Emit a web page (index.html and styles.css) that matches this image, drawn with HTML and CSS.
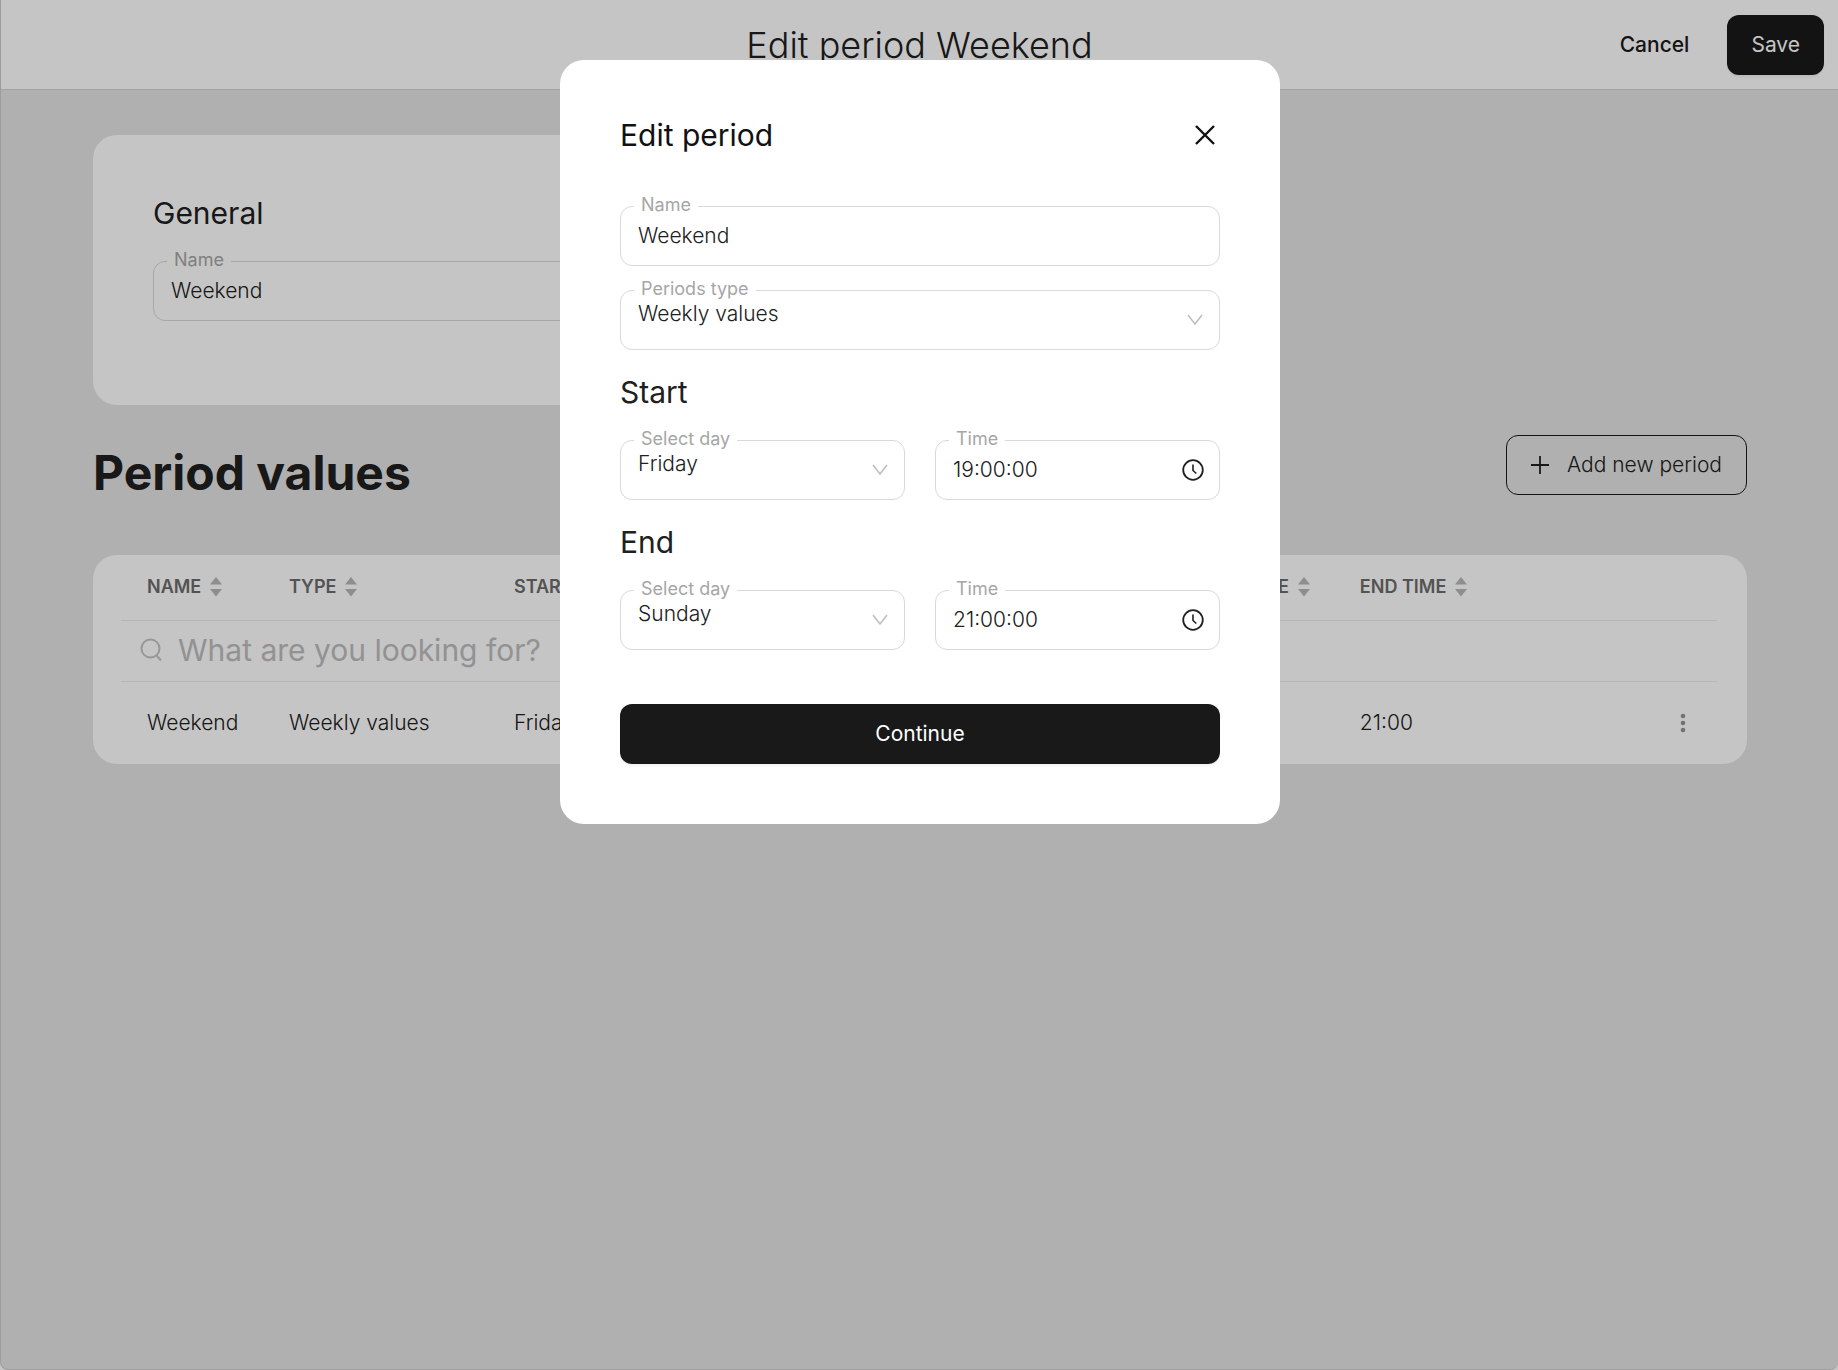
FILE: index.html
```html
<!DOCTYPE html>
<html lang="en">
<head>
<meta charset="utf-8">
<meta name="viewport" content="width=device-width, initial-scale=1">
<title>Edit period Weekend</title>
<link rel="stylesheet" href="styles.css">
</head>
<body>
<svg class="sprite" aria-hidden="true">
  <symbol id="sort" viewBox="0 0 12 20"><path d="M6 0l6 7.500H0zM0 12h12L6 19.500z" fill="currentColor"/></symbol>
  <symbol id="chevron" viewBox="0 0 16 12"><path d="M1 1l7 9 7-9" fill="none" stroke="currentColor" stroke-width="1.500"/></symbol>
  <symbol id="clock" viewBox="0 0 22 22"><circle cx="11" cy="11" r="9.800" fill="none" stroke="currentColor" stroke-width="1.800"/><path d="M11 5.500v6l3.300 3" fill="none" stroke="currentColor" stroke-width="1.600"/></symbol>
</svg>
<div class="app">
  <header class="topbar">
    <h1 class="topbar-title">Edit period Weekend</h1>
    <div class="topbar-actions">
      <button class="btn btn-text" type="button">Cancel</button>
      <button class="btn btn-primary" type="button">Save</button>
    </div>
  </header>
  <main class="content">
    <section class="card general">
      <h2 class="heading">General</h2>
      <div class="field">
        <input class="control" id="general-name" type="text" value="Weekend">
        <label class="field-label" for="general-name">Name</label>
      </div>
    </section>
    <div class="section-bar">
      <h2 class="section-title">Period values</h2>
      <button class="btn btn-outline" type="button">
        <svg class="icon-plus" viewBox="0 0 18 18" aria-hidden="true"><path d="M9 0v18M0 9h18" fill="none" stroke="currentColor" stroke-width="1.800"/></svg>
        Add new period
      </button>
    </div>
    <section class="card table-card">
      <table class="periods">
        <colgroup><col class="c-name"><col class="c-type"><col class="c-start"><col class="c-start-time"><col class="c-end"><col class="c-end-time"><col class="c-menu"></colgroup>
        <thead>
          <tr>
            <th scope="col"><span class="th">NAME <svg class="icon-sort"><use href="#sort"/></svg></span></th>
            <th scope="col"><span class="th">TYPE <svg class="icon-sort"><use href="#sort"/></svg></span></th>
            <th scope="col"><span class="th">START DATE <svg class="icon-sort"><use href="#sort"/></svg></span></th>
            <th scope="col"><span class="th">START TIME <svg class="icon-sort"><use href="#sort"/></svg></span></th>
            <th scope="col"><span class="th">END DATE <svg class="icon-sort"><use href="#sort"/></svg></span></th>
            <th scope="col"><span class="th">END TIME <svg class="icon-sort"><use href="#sort"/></svg></span></th>
            <th></th>
          </tr>
        </thead>
        <tbody>
          <tr class="search-row">
            <td colspan="7">
              <label class="search">
                <svg class="icon-search" viewBox="0 0 22 24" aria-hidden="true"><circle cx="10.500" cy="10.500" r="9" fill="none" stroke="currentColor" stroke-width="2"/><path d="M16.500 17.500l4.500 5" fill="none" stroke="currentColor" stroke-width="2"/></svg>
                <input class="search-input" type="search" placeholder="What are you looking for?" aria-label="Search periods">
              </label>
            </td>
          </tr>
          <tr class="data-row">
            <td>Weekend</td><td>Weekly values</td><td>Friday</td><td>19:00</td><td>Sunday</td><td>21:00</td>
            <td class="menu-cell"><button class="icon-btn" type="button" aria-label="More actions"><svg class="icon-more" viewBox="0 0 6 20" aria-hidden="true"><g fill="currentColor"><circle cx="3" cy="3" r="2.300"/><circle cx="3" cy="10" r="2.300"/><circle cx="3" cy="17" r="2.300"/></g></svg></button></td>
          </tr>
        </tbody>
      </table>
    </section>
  </main>
</div>
<div class="backdrop">
  <form class="modal" role="dialog" aria-modal="true" aria-labelledby="modal-title">
    <div class="modal-head">
      <h2 class="heading" id="modal-title">Edit period</h2>
      <button class="icon-btn" type="button" aria-label="Close"><svg class="icon-close" viewBox="0 0 20 20" aria-hidden="true"><path d="M1 1l18 18M19 1L1 19" fill="none" stroke="currentColor" stroke-width="2.400"/></svg></button>
    </div>
    <div class="field">
      <input class="control" id="name" type="text" value="Weekend">
      <label class="field-label" for="name">Name</label>
    </div>
    <div class="field">
      <select class="control select" id="type"><option>Weekly values</option></select>
      <label class="field-label" for="type">Periods type</label>
      <svg class="field-icon icon-chevron"><use href="#chevron"/></svg>
    </div>
    <section class="group">
      <h3 class="heading">Start</h3>
      <div class="pair">
        <div class="field">
          <select class="control select" id="start-day"><option>Friday</option></select>
          <label class="field-label" for="start-day">Select day</label>
          <svg class="field-icon icon-chevron"><use href="#chevron"/></svg>
        </div>
        <div class="field">
          <input class="control" id="start-time" type="text" value="19:00:00">
          <label class="field-label" for="start-time">Time</label>
          <svg class="field-icon icon-clock"><use href="#clock"/></svg>
        </div>
      </div>
    </section>
    <section class="group">
      <h3 class="heading">End</h3>
      <div class="pair">
        <div class="field">
          <select class="control select" id="end-day"><option>Sunday</option></select>
          <label class="field-label" for="end-day">Select day</label>
          <svg class="field-icon icon-chevron"><use href="#chevron"/></svg>
        </div>
        <div class="field">
          <input class="control" id="end-time" type="text" value="21:00:00">
          <label class="field-label" for="end-time">Time</label>
          <svg class="field-icon icon-clock"><use href="#clock"/></svg>
        </div>
      </div>
    </section>
    <button class="btn btn-primary modal-submit" type="button">Continue</button>
  </form>
</div>
</body>
</html>
```
FILE: styles.css
```css
*, *::before, *::after { box-sizing: border-box; }

:root {
  --ink: #191919;
  --text: #202020;
  --line: #d9d9d9;
  --muted: #a6a6a6;
  --page: #e4e4e4;
}

body {
  margin: 0;
  background: #fff;
  color: var(--text);
  font-family: Inter, "Liberation Sans", sans-serif;
  font-size: 21px;
  font-weight: 300;
  line-height: 28px;
}

h1, h2, h3 { margin: 0; }
button, input, select { font: inherit; color: inherit; }
button { cursor: pointer; }
svg { display: block; flex: none; }
.sprite { position: absolute; width: 0; height: 0; }

.app {
  min-height: 100vh;
  background: var(--page);
  border: solid #cbcbcb;
  border-width: 0 0 1px 1px;
  border-radius: 0 0 8px 8px;
}

.topbar {
  display: grid;
  grid-template-columns: 1fr auto 1fr;
  align-items: center;
  height: 90px;
  background: #fff;
  border-bottom: 1px solid #d4d4d4;
}
.topbar-title {
  grid-column: 2;
  font-size: 36px;
  font-weight: 300;
  line-height: 44px;
}
.topbar-actions {
  display: flex;
  justify-content: flex-end;
  gap: 14px;
  padding-right: 14px;
}

.btn {
  display: inline-flex;
  align-items: center;
  justify-content: center;
  height: 60px;
  padding: 0 24px;
  border: 0;
  border-radius: 12px;
  background: none;
  font-weight: 400;
}
.btn-text {
  color: var(--ink);
  font-weight: 500;
}
.btn-primary {
  background: var(--ink);
  color: #fff;
  box-shadow: 0 2px 2px rgba(0, 0, 0, 0.05);
}
.btn-outline {
  gap: 18px;
  border: 1px solid var(--ink);
  font-weight: 300;
}

.content { padding: 45px 91px 60px 92px; }
.card {
  background: #fff;
  border-radius: 24px;
}
.general {
  width: 50%;
  padding: 60px 60px 84px;
}
.general .heading { margin-bottom: 30px; }
.heading {
  font-size: 30px;
  font-weight: 400;
  line-height: 36px;
}

.section-bar {
  display: flex;
  justify-content: space-between;
  align-items: flex-start;
  padding: 30px 0 60px;
}
.section-title {
  padding-top: 8px;
  font-size: 48px;
  font-weight: 700;
  line-height: 60px;
  margin-bottom: -8px;
}

.table-card { padding: 0 30px 0 28px; }
.periods {
  width: 100%;
  table-layout: fixed;
  border-collapse: collapse;
}
.c-name { width: 142px; }
.c-type { width: 225px; }
.c-start { width: 21%; }
.c-start-time { width: 22%; }
.c-end { width: 10%; }
.c-end-time { width: 15%; }
.periods th, .periods td {
  padding: 0 0 0 26px;
  text-align: left;
  white-space: nowrap;
}
.periods th {
  height: 65px;
  border-bottom: 1px solid #ececec;
  color: #6c6c6c;
  font-size: 18px;
  font-weight: 600;
}
.th { display: flex; align-items: center; gap: 9px; }
.icon-sort { width: 12px; height: 20px; color: #b8b8b8; }
.search-row td {
  height: 61px;
  padding-left: 19px;
  border-bottom: 1px solid #ececec;
}
.search {
  display: flex;
  align-items: center;
  gap: 16px;
  padding-bottom: 2px;
  color: #c4c4c4;
}
.icon-search { width: 22px; height: 24px; }
.search-input {
  flex: 1;
  min-width: 0;
  height: 40px;
  padding: 0;
  border: 0;
  outline: 0;
  appearance: none;
  background: none;
  font-size: 30px;
  font-weight: 400;
}
.search-input::placeholder { color: #bdbdbd; opacity: 1; }
.data-row td { height: 83px; }
.periods .menu-cell { padding: 0 19px 0 0; }
.icon-btn {
  display: flex;
  align-items: center;
  justify-content: center;
  width: 30px;
  height: 30px;
  padding: 0;
  border: 0;
  background: none;
}
.menu-cell .icon-btn { margin-left: auto; }
.icon-more { width: 6px; height: 20px; color: #949494; }
.icon-plus { width: 18px; height: 18px; }

.field { position: relative; }
.field-label {
  position: absolute;
  top: -12px;
  left: 14px;
  padding: 0 7px;
  background: #fff;
  color: var(--muted);
  font-size: 18px;
  font-weight: 400;
  line-height: 22px;
}
.control {
  display: block;
  width: 100%;
  height: 60px;
  padding: 0 17px 2px;
  border: 1px solid var(--line);
  border-radius: 12px;
  outline: 0;
  background: #fff;
  appearance: none;
}
.select { padding-bottom: 12px; }
.field-icon {
  position: absolute;
  top: 0;
  bottom: 0;
  margin: auto 0;
  pointer-events: none;
}
.icon-chevron { right: 17px; width: 16px; height: 12px; color: #bdbdbd; }
.icon-clock { right: 16px; width: 22px; height: 22px; }

.backdrop {
  position: fixed;
  inset: 0;
  overflow: auto;
  padding: 60px 0 60px 2px;
  background: rgba(0, 0, 0, 0.228);
}
.modal {
  display: flex;
  flex-direction: column;
  gap: 24px;
  width: 100%;
  max-width: 720px;
  margin: 0 auto;
  padding: 60px;
  border-radius: 24px;
  background: #fff;
}
.modal-head {
  display: flex;
  align-items: center;
  justify-content: space-between;
  height: 30px;
  margin-bottom: 32px;
  color: #111;
}
.icon-close { width: 20px; height: 20px; }
.group {
  display: flex;
  flex-direction: column;
  gap: 30px;
}
.pair {
  display: grid;
  grid-template-columns: 1fr 1fr;
  gap: 30px;
}
.modal-submit { margin-top: 30px; }
```
